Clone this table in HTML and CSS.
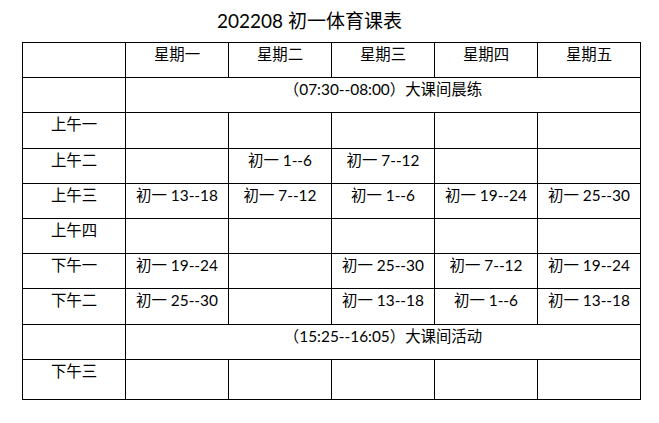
FILE: index.html
```html
<!DOCTYPE html>
<html lang="zh-CN">
<head>
<meta charset="utf-8">
<link rel="stylesheet" href="styles.css">
</head>
<body>
<div class="page">
  <h1 class="title">202208 初一体育课表</h1>
  <table class="schedule">
    <colgroup>
      <col class="c"><col class="c"><col class="c"><col class="c"><col class="c"><col class="c">
    </colgroup>
    <tr><td></td><td>星期一</td><td>星期二</td><td>星期三</td><td>星期四</td><td>星期五</td></tr>
    <tr><td></td><td colspan="5">（07:30--08:00）大课间晨练</td></tr>
    <tr><td>上午一</td><td></td><td></td><td></td><td></td><td></td></tr>
    <tr><td>上午二</td><td></td><td>初一 1--6</td><td>初一 7--12</td><td></td><td></td></tr>
    <tr><td>上午三</td><td>初一 13--18</td><td>初一 7--12</td><td>初一 1--6</td><td>初一 19--24</td><td>初一 25--30</td></tr>
    <tr><td>上午四</td><td></td><td></td><td></td><td></td><td></td></tr>
    <tr><td>下午一</td><td>初一 19--24</td><td></td><td>初一 25--30</td><td>初一 7--12</td><td>初一 19--24</td></tr>
    <tr><td>下午二</td><td>初一 25--30</td><td></td><td>初一 13--18</td><td>初一 1--6</td><td>初一 13--18</td></tr>
    <tr><td></td><td colspan="5">（15:25--16:05）大课间活动</td></tr>
    <tr class="last"><td>下午三</td><td></td><td></td><td></td><td></td><td></td></tr>
  </table>
</div>
</body>
</html>
```
FILE: styles.css
```css
html, body {
  margin: 0;
  padding: 0;
  background: #ffffff;
}
.page {
  padding: 0 0 0 22px;
  font-family: Lato, "Noto Sans CJK SC", sans-serif;
  color: #000;
}
.title {
  margin: 0;
  padding: 8px 0 0 195px;
  height: 42px;
  box-sizing: border-box;
  font-size: 19px;
  font-weight: normal;
  line-height: 26px;
}
.schedule {
  border-collapse: collapse;
  table-layout: fixed;
  width: 618px;
  font-size: 15.4px;
}
.schedule col.c {
  width: 103px;
}
.schedule td {
  border: 1px solid #000;
  height: 35.2px;
  box-sizing: border-box;
  padding: 0 2px 0;
  vertical-align: top;
  text-align: center;
  line-height: 22px;
  white-space: nowrap;
}
.schedule tr.last td {
  height: 40px;
}
```
